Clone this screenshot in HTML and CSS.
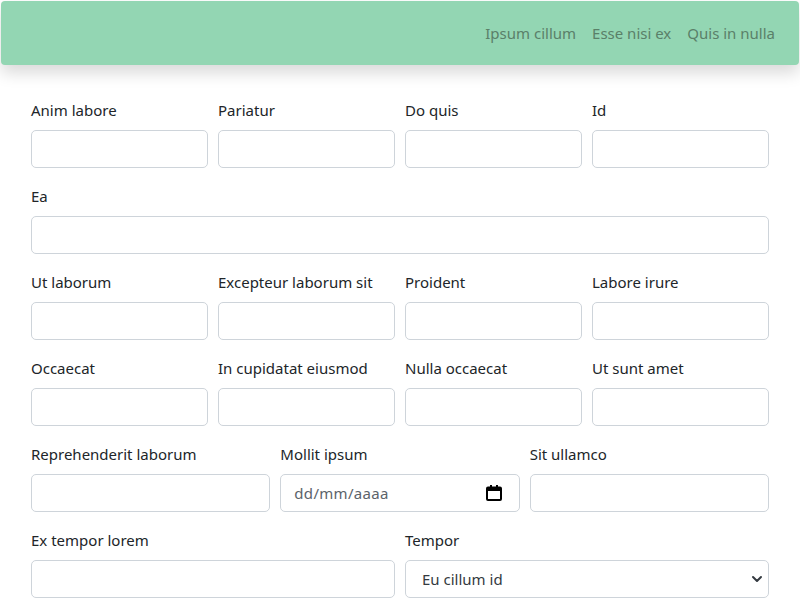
FILE: index.html
```html
<!DOCTYPE html>
<html lang="en">
<head>
<meta charset="utf-8">
<link rel="stylesheet" href="styles.css">
</head>
<body>
<header class="topbar">
  <nav class="nav">
    <a class="nav-link" href="#">Ipsum cillum</a>
    <a class="nav-link" href="#">Esse nisi ex</a>
    <a class="nav-link" href="#">Quis in nulla</a>
  </nav>
</header>
<main class="form">
  <div class="row cols-4">
    <div class="field"><label class="label">Anim labore</label><input class="input" type="text"></div>
    <div class="field"><label class="label">Pariatur</label><input class="input" type="text"></div>
    <div class="field"><label class="label">Do quis</label><input class="input" type="text"></div>
    <div class="field"><label class="label">Id</label><input class="input" type="text"></div>
  </div>
  <div class="row cols-1">
    <div class="field"><label class="label">Ea</label><input class="input" type="text"></div>
  </div>
  <div class="row cols-4">
    <div class="field"><label class="label">Ut laborum</label><input class="input" type="text"></div>
    <div class="field"><label class="label">Excepteur laborum sit</label><input class="input" type="text"></div>
    <div class="field"><label class="label">Proident</label><input class="input" type="text"></div>
    <div class="field"><label class="label">Labore irure</label><input class="input" type="text"></div>
  </div>
  <div class="row cols-4">
    <div class="field"><label class="label">Occaecat</label><input class="input" type="text"></div>
    <div class="field"><label class="label">In cupidatat eiusmod</label><input class="input" type="text"></div>
    <div class="field"><label class="label">Nulla occaecat</label><input class="input" type="text"></div>
    <div class="field"><label class="label">Ut sunt amet</label><input class="input" type="text"></div>
  </div>
  <div class="row cols-3">
    <div class="field"><label class="label">Reprehenderit laborum</label><input class="input" type="text"></div>
    <div class="field"><label class="label">Mollit ipsum</label>
      <div class="input date">
        <span class="date-ph">dd/mm/aaaa</span>
        <svg class="cal" width="18" height="18" viewBox="0 0 18 18"><rect x="2" y="3.5" width="14" height="12.5" rx="1" fill="none" stroke="#000" stroke-width="2"/><rect x="2" y="3.5" width="14" height="3.5" fill="#000"/><rect x="5" y="1" width="2" height="3" fill="#000"/><rect x="11" y="1" width="2" height="3" fill="#000"/></svg>
      </div>
    </div>
    <div class="field"><label class="label">Sit ullamco</label><input class="input" type="text"></div>
  </div>
  <div class="row cols-2">
    <div class="field"><label class="label">Ex tempor lorem</label><input class="input" type="text"></div>
    <div class="field"><label class="label">Tempor</label>
      <div class="select-wrap">
        <select class="input select"><option>Eu cillum id</option></select>
        <svg class="chev" width="12" height="12" viewBox="0 0 12 12"><path d="M2 4l4 4 4-4" fill="none" stroke="#343a40" stroke-width="2" stroke-linecap="round" stroke-linejoin="round"/></svg>
      </div>
    </div>
  </div>
</main>
</body>
</html>
```
FILE: styles.css
```css
* { box-sizing: border-box; }
html, body { margin: 0; padding: 0; background: #fff; }
body {
  font-family: "Noto Sans", "Open Sans", sans-serif;
  font-size: 15px;
  color: #212529;
}
.topbar {
  margin: 1px;
  height: 64px;
  background: #93d6b3;
  border-radius: 4px;
  box-shadow: 0 8px 16px rgba(0,0,0,0.15);
  display: flex;
  align-items: center;
  justify-content: flex-end;
  padding: 0 16px;
}
.nav { display: flex; }
.nav-link {
  color: #5a8069;
  text-decoration: none;
  padding: 0 8px;
  font-size: 15px;
  line-height: 24px;
}
.form {
  padding: 32px 31px 0;
}
.row {
  display: grid;
  column-gap: 10px;
  margin-bottom: 16px;
}
.cols-4 { grid-template-columns: repeat(4, 1fr); }
.cols-3 { grid-template-columns: repeat(3, 1fr); }
.cols-2 { grid-template-columns: repeat(2, 1fr); }
.cols-1 { grid-template-columns: 1fr; }
.field { display: flex; flex-direction: column; min-width: 0; }
.label {
  display: block;
  line-height: 24px;
  margin-bottom: 8px;
}
.input {
  display: block;
  width: 100%;
  height: 38px;
  border: 1px solid #ced4da;
  border-radius: 5px;
  background: #fff;
  font-family: inherit;
  font-size: 15px;
  color: #212529;
  padding: 0 12px;
}
.date {
  display: flex;
  align-items: center;
  justify-content: space-between;
  padding: 0 16px 0 13px;
}
.date-ph { color: #5c636a; letter-spacing: 0.3px; }
.cal { display: block; }
.select-wrap { position: relative; }
.select {
  appearance: none;
  -webkit-appearance: none;
  padding-left: 16px;
  color: #343a40;
}
.chev {
  position: absolute;
  right: 6px;
  top: 13px;
}
```
